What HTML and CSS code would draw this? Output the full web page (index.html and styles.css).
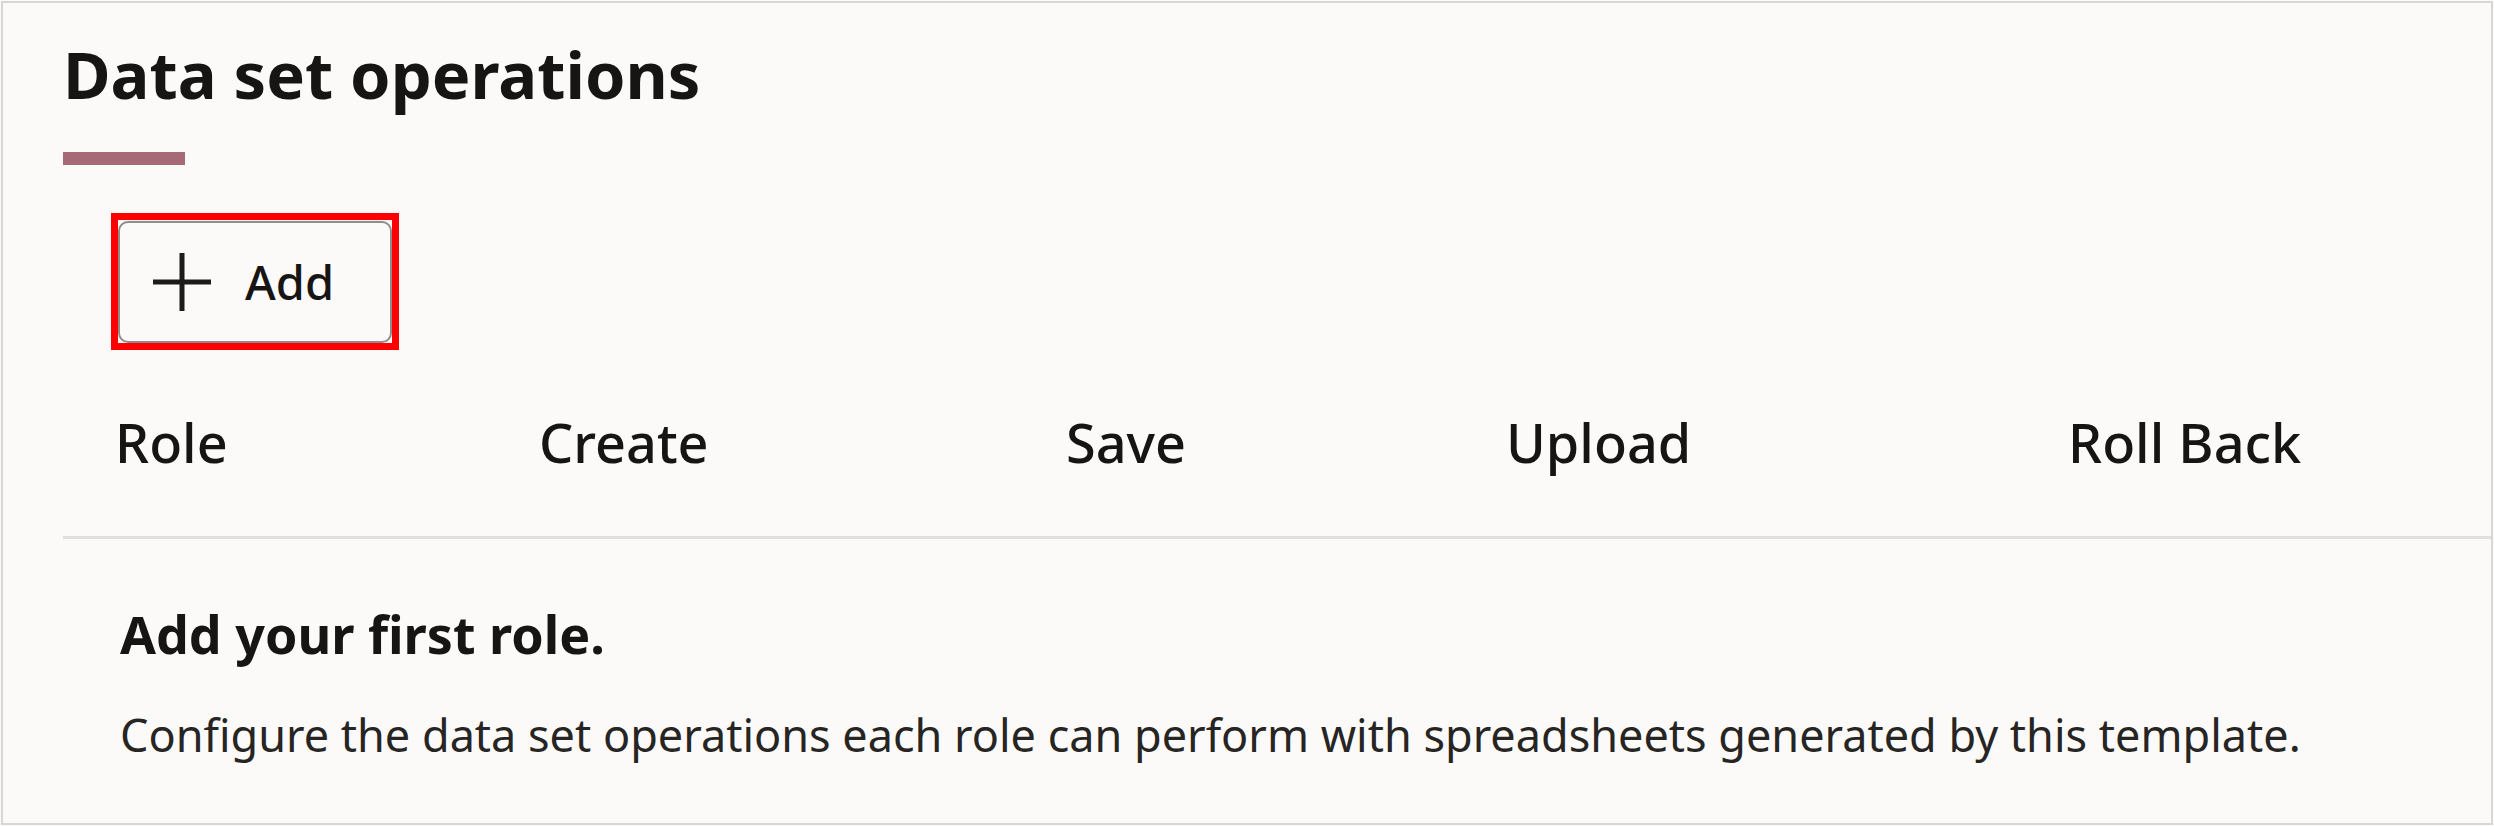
FILE: index.html
```html
<!DOCTYPE html>
<html lang="en">
<head>
<meta charset="utf-8">
<title>Data set operations</title>
<link rel="stylesheet" href="styles.css">
</head>
<body>
<section class="panel">
  <h1 class="title">Data set operations</h1>
  <div class="accent"></div>
  <div class="toolbar">
    <div class="highlight">
      <button class="add-btn" type="button">
        <svg class="plus" width="58" height="58" viewBox="0 0 58 58" aria-hidden="true">
          <line x1="29" y1="0" x2="29" y2="58"/>
          <line x1="0" y1="29" x2="58" y2="29"/>
        </svg>
        <span class="add-label">Add</span>
      </button>
    </div>
  </div>
  <div class="table">
    <div class="thead">
      <div class="th">Role</div>
      <div class="th">Create</div>
      <div class="th">Save</div>
      <div class="th">Upload</div>
      <div class="th">Roll Back</div>
    </div>
    <div class="empty">
      <div class="empty-title">Add your first role.</div>
      <div class="empty-text">Configure the data set operations each role can perform with spreadsheets generated by this template.</div>
    </div>
  </div>
</section>
</body>
</html>
```
FILE: styles.css
```css
html, body {
  margin: 0;
  padding: 0;
  background: #fcfaf9;
}
body {
  font-family: "Noto Sans", "Open Sans", sans-serif;
  color: #161513;
  padding: 1px;
  box-sizing: border-box;
  height: 826px;
}
.panel {
  box-sizing: border-box;
  height: 824px;
  border: 2px solid #d7d7d6;
  background: #fcfaf9;
  padding: 39px 0 0 60px;
  overflow: hidden;
}
.title {
  margin: 0;
  font-size: 65px;
  line-height: 65px;
  font-weight: 700;
  color: #161513;
}
.accent {
  width: 122px;
  height: 13px;
  margin-top: 45px;
  background: #a56a75;
}
.toolbar {
  padding-top: 48px;
  padding-left: 48px;
  display: flex;
}
.highlight {
  display: flex;
  padding-top: 1px;
  border: 7px solid #ff0000;
}
.add-btn {
  box-sizing: border-box;
  width: 274px;
  height: 122px;
  display: flex;
  align-items: center;
  margin: 0;
  padding: 0 0 0 33px;
  border: 2px solid #8e8d8b;
  border-radius: 10px;
  background: #fcfaf9;
  font-family: inherit;
  color: #161513;
  cursor: pointer;
}
.plus {
  flex: none;
  stroke: #1c1b19;
  stroke-width: 5;
}
.add-label {
  margin-left: 34px;
  font-size: 47px;
  font-weight: 500;
  line-height: 1;
}
.table {
  display: flex;
  flex-direction: column;
}
.thead {
  display: grid;
  grid-template-columns: 424px 527px 440px 562px 1fr;
  padding: 60px 0 61px;
  border-bottom: 3px solid #e1dfdd;
}
.th {
  padding-left: 52px;
  font-size: 54px;
  line-height: 65px;
  font-weight: 500;
  white-space: nowrap;
}
.empty {
  padding: 64px 0 0 57px;
}
.empty-title {
  font-size: 52px;
  line-height: 62px;
  font-weight: 700;
}
.empty-text {
  margin-top: 43px;
  font-size: 45px;
  line-height: 54px;
  font-weight: 400;
  color: #262523;
  white-space: nowrap;
}
```
